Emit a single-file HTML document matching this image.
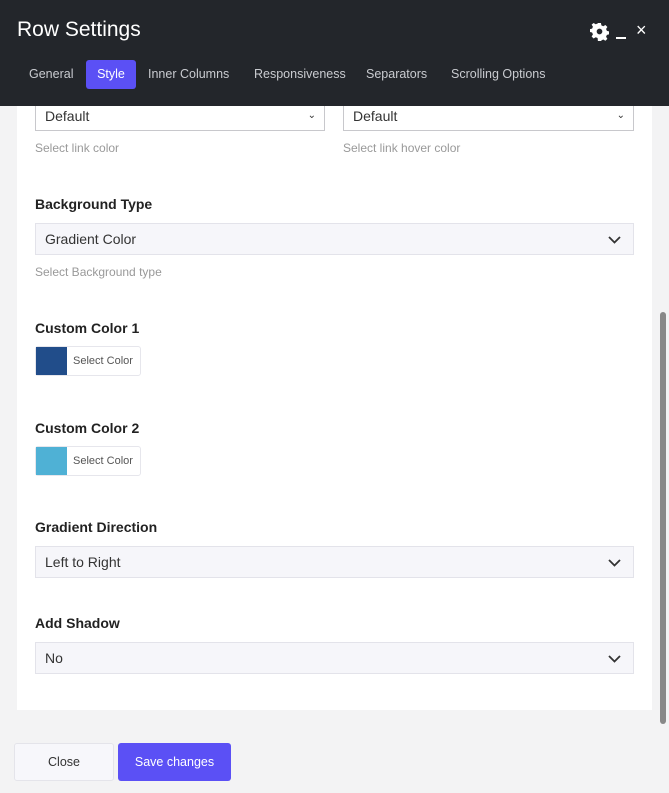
<!DOCTYPE html>
<html><head><style>
*{box-sizing:border-box;margin:0;padding:0}
body{width:669px;height:793px;background:#f3f3f4;font-family:"Liberation Sans",sans-serif;position:relative;overflow:hidden}
.a{position:absolute}
.hdr{left:0;top:0;width:669px;height:106px;background:#23262b;z-index:2}
.z{z-index:3}
.tab{top:60px;height:29px;line-height:29px;font-size:12.5px;color:#c9cbd0;z-index:3}
.panel{left:17px;top:106px;width:635px;height:604px;background:#fff}
.sel{background:#f6f6fa;border:1px solid #e3e3ea;height:32px;font-size:14px;color:#333;padding-left:9px;line-height:30px}
.lbl{font-size:14px;font-weight:bold;color:#222}
.help{font-size:12px;color:#999}
.chev{position:absolute;right:12px;top:9px}
.sw{width:106px;height:30px;border:1px solid #e6e6ec;border-radius:3px;display:flex;background:#fff}
.sw i{width:31px;height:28px;display:block}
.sw span{font-size:11px;color:#555;line-height:28px;padding-left:6px}
</style></head><body>
<div class="a panel"></div>
<div class="a sel" style="left:35px;top:98px;width:290px;height:33px;background:#fff;border-color:#c8c8cc;line-height:34px">Default<span style="position:absolute;right:8px;font-size:10px">⌄</span></div>
<div class="a sel" style="left:343px;top:98px;width:291px;height:33px;background:#fff;border-color:#c8c8cc;line-height:34px">Default<span style="position:absolute;right:8px;font-size:10px">⌄</span></div>

<div class="a hdr"></div>
<div class="a z" style="left:17px;top:18px;font-size:21px;color:#fff">Row Settings</div>
<svg class="a z" style="left:590px;top:22px" width="19" height="19" viewBox="0 0 20 20"><path fill="#fff" d="M8.5 1h3l.5 2.5 2 1 2.2-1.4 2.1 2.1-1.4 2.2.9 2 2.6.6v3l-2.6.5-.9 2 1.4 2.2-2.1 2.1-2.2-1.4-2 .9-.5 2.6h-3L8 16.9l-2-.9-2.2 1.4-2.1-2.1L3.1 13l-.9-2L0 10.5v-3l2.2-.5.9-2-1.4-2.2L3.8 1 6 2.4 8 1.6z"/><circle cx="10" cy="10" r="3" fill="#23262b"/></svg>
<div class="a z" style="left:616px;top:37px;width:10px;height:2px;background:#fff"></div>
<div class="a z" style="left:636px;top:20px;font-size:18px;color:#fff">×</div>
<div class="a tab" style="left:29px">General</div>
<div class="a tab" style="left:86px;width:50px;background:#5b50f5;color:#fff;border-radius:3px;text-align:center">Style</div>
<div class="a tab" style="left:148px">Inner Columns</div>
<div class="a tab" style="left:254px">Responsiveness</div>
<div class="a tab" style="left:366px">Separators</div>
<div class="a tab" style="left:451px">Scrolling Options</div>

<div class="a help" style="left:35px;top:141px">Select link color</div>
<div class="a help" style="left:343px;top:141px">Select link hover color</div>

<div class="a lbl" style="left:35px;top:196px">Background Type</div>
<div class="a sel" style="left:35px;top:223px;width:599px">Gradient Color<svg class="chev" width="13" height="13" viewBox="0 0 13 13"><path d="M1 4l5.5 5.5L12 4" fill="none" stroke="#333" stroke-width="1.8"/></svg></div>
<div class="a help" style="left:35px;top:265px">Select Background type</div>

<div class="a lbl" style="left:35px;top:320px">Custom Color 1</div>
<div class="a sw" style="left:35px;top:346px"><i style="background:#214d8a"></i><span>Select Color</span></div>
<div class="a lbl" style="left:35px;top:420px">Custom Color 2</div>
<div class="a sw" style="left:35px;top:446px"><i style="background:#4fb1d5"></i><span>Select Color</span></div>

<div class="a lbl" style="left:35px;top:519px">Gradient Direction</div>
<div class="a sel" style="left:35px;top:546px;width:599px">Left to Right<svg class="chev" width="13" height="13" viewBox="0 0 13 13"><path d="M1 4l5.5 5.5L12 4" fill="none" stroke="#333" stroke-width="1.8"/></svg></div>

<div class="a lbl" style="left:35px;top:615px">Add Shadow</div>
<div class="a sel" style="left:35px;top:642px;width:599px">No<svg class="chev" width="13" height="13" viewBox="0 0 13 13"><path d="M1 4l5.5 5.5L12 4" fill="none" stroke="#333" stroke-width="1.8"/></svg></div>

<div class="a" style="left:660px;top:312px;width:6px;height:412px;background:#888;border-radius:3px"></div>

<div class="a" style="left:14px;top:743px;width:100px;height:38px;background:#f7f7fb;border:1px solid #e4e4ea;border-radius:3px;text-align:center;line-height:36px;font-size:12.5px;color:#333">Close</div>
<div class="a" style="left:118px;top:743px;width:113px;height:38px;background:#5b50f5;border-radius:3px;text-align:center;line-height:38px;font-size:12.5px;color:#fff">Save changes</div>
</body></html>
